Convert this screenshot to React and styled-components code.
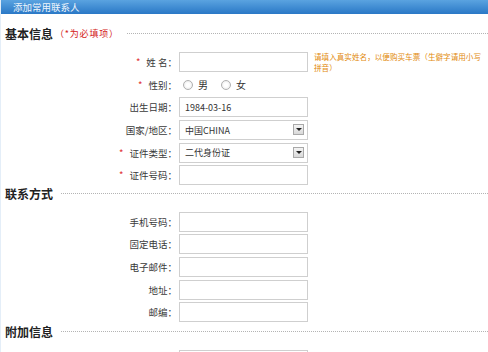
import React from "react";
import styled, { createGlobalStyle } from "styled-components";

const Global = createGlobalStyle`
  html, body { margin: 0; padding: 0; background: #fff; }
  body { font-family: "Noto Sans CJK SC", "Liberation Sans", sans-serif; font-size: 10px; color: #333; }
`;

const Page = styled.div`
  width: 488px;
  height: 352px;
  overflow: hidden;
  border-left: 1px solid #e4eef8;
  box-sizing: border-box;
`;

const Header = styled.div`
  height: 14px;
  line-height: 14px;
  padding-left: 12px;
  font-size: 9.5px;
  color: #eef5fc;
  background: linear-gradient(#5aa3e0, #2a78c6);
  white-space: nowrap;
`;

const SectionTitle = styled.div`
  display: flex;
  align-items: center;
  height: 14px;
  margin-top: ${(p) => p.$mt || 0}px;
  padding-left: 4px;
  white-space: nowrap;
  &::after {
    content: "";
    flex: 1;
    margin-left: 8px;
    border-top: 1px dotted #b4b4b4;
    height: 0;
  }
`;

const TitleText = styled.span`
  font-weight: bold;
  font-size: 12px;
  color: #222;
`;

const Required = styled.span`
  font-size: 9px;
  letter-spacing: 0.8px;
  color: #d42020;
  margin-left: 2px;
`;

const Rows = styled.div`
  margin-top: ${(p) => p.$mt || 0}px;
`;

const Row = styled.div`
  display: flex;
  align-items: center;
  height: 22.6px;
`;

const Label = styled.div`
  width: 176px;
  flex: none;
  text-align: right;
  font-size: 9.5px;
  color: #3a3a3a;
  white-space: nowrap;
`;

const Star = styled.span`
  color: #e03030;
  margin-right: 6px;
`;

const Field = styled.div`
  margin-left: 2px;
  width: 129px;
  height: 20px;
  box-sizing: border-box;
  border: 1px solid #cfcfcf;
  background: #fff;
  display: flex;
  align-items: center;
  padding-left: 5px;
  font-size: 9px;
  color: #333;
  position: relative;
`;

const ArrowBox = styled.div`
  position: absolute;
  right: 3px;
  top: 3px;
  width: 11px;
  height: 11px;
  box-sizing: border-box;
  border: 1px solid #a9a9a9;
  background: linear-gradient(#f4f4f4, #d9d9d9);
  display: flex;
  align-items: center;
  justify-content: center;
  &::after {
    content: "";
    border-left: 3px solid transparent;
    border-right: 3px solid transparent;
    border-top: 3px solid #222;
  }
`;

const Hint = styled.div`
  margin-left: 6px;
  width: 170px;
  font-size: 7.6px;
  line-height: 11px;
  color: #e28a0c;
`;

const RadioGroup = styled.div`
  display: flex;
  align-items: center;
  margin-left: 6px;
`;

const Radio = styled.span`
  width: 8px;
  height: 8px;
  border-radius: 50%;
  border: 1px solid #b0b0b0;
  background: radial-gradient(#fff 30%, #e4e4e4);
  margin-right: 5px;
`;

const RadioText = styled.span`
  font-size: 10px;
  color: #333;
  margin-right: 13px;
`;

const basic = [
  { label: "出生日期：", value: "1984-03-16" },
  { label: "国家/地区：", value: "中国CHINA", select: true },
  { label: "证件类型：", value: "二代身份证", select: true, req: true },
  { label: "证件号码：", value: "", req: true },
];

const contact = ["手机号码：", "固定电话：", "电子邮件：", "地址：", "邮编："];

export default function App() {
  return (
    <Page>
      <Global />
      <Header>添加常用联系人</Header>
      <SectionTitle $mt={12}>
        <TitleText>基本信息</TitleText>
        <Required>（*为必填项）</Required>
      </SectionTitle>
      <Rows $mt={11}>
        <Row>
          <Label><Star>*</Star>姓 名：</Label>
          <Field />
          <Hint>请填入真实姓名，以便购买车票（生僻字请用小写拼音）</Hint>
        </Row>
        <Row>
          <Label><Star>*</Star>性别：</Label>
          <RadioGroup>
            <Radio /><RadioText>男</RadioText>
            <Radio /><RadioText>女</RadioText>
          </RadioGroup>
        </Row>
        {basic.map((r) => (
          <Row key={r.label}>
            <Label>{r.req && <Star>*</Star>}{r.label}</Label>
            <Field>
              {r.value}
              {r.select && <ArrowBox />}
            </Field>
          </Row>
        ))}
      </Rows>
      <SectionTitle>
        <TitleText>联系方式</TitleText>
      </SectionTitle>
      <Rows $mt={10}>
        {contact.map((l) => (
          <Row key={l}>
            <Label>{l}</Label>
            <Field />
          </Row>
        ))}
      </Rows>
      <SectionTitle $mt={1}>
        <TitleText>附加信息</TitleText>
      </SectionTitle>
      <Rows $mt={10}>
        <Row>
          <Label />
          <Field />
        </Row>
      </Rows>
    </Page>
  );
}
